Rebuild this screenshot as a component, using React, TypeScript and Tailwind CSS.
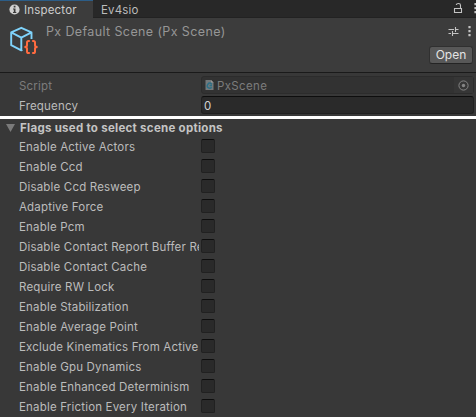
import React from "react";

const flags = [
  "Enable Active Actors",
  "Enable Ccd",
  "Disable Ccd Resweep",
  "Adaptive Force",
  "Enable Pcm",
  "Disable Contact Report Buffer Resizing",
  "Disable Contact Cache",
  "Require RW Lock",
  "Enable Stabilization",
  "Enable Average Point",
  "Exclude Kinematics From Active Actors",
  "Enable Gpu Dynamics",
  "Enable Enhanced Determinism",
  "Enable Friction Every Iteration",
];

function InfoIcon() {
  return (
    <svg className="h-[11px] w-[11px]" viewBox="0 0 11 11">
      <circle cx="5.5" cy="5.5" r="5.1" fill="#d0d0d0" />
      <path d="M4.7 1.8h1.8v1.7H4.7zM4 4.5h2.5v3.5h.8v1H4V8h.8V5.5H4z" fill="#3c3c3c" />
    </svg>
  );
}

function LockIcon() {
  return (
    <svg className="h-[12px] w-[10px]" viewBox="0 0 10 12" fill="none" stroke="#c4c4c4" strokeWidth="1.1">
      <path d="M1.5 6.5h7v4h-7z" />
      <path d="M7.5 6.5V3.2Q7.5 1.5 5.5 1.5T3.2 3" />
    </svg>
  );
}

function DotsIcon() {
  return (
    <svg className="h-[12px] w-[3px] shrink-0" viewBox="0 0 3 12" fill="#c4c4c4">
      <rect x=".4" y="1" width="2.2" height="2.2" rx=".5" />
      <rect x=".4" y="5" width="2.2" height="2.2" rx=".5" />
      <rect x=".4" y="9" width="2.2" height="2.2" rx=".5" />
    </svg>
  );
}

function PresetIcon() {
  return (
    <svg className="h-[10px] w-[11px]" viewBox="0 0 11 10" fill="none" stroke="#c4c4c4" strokeWidth="1.1">
      <path d="M.5 3.5h5.5M7.5 3.5h3M7.5 1v5M.5 7.5h2.5M4.5 7.5h6M4.5 5v5" />
    </svg>
  );
}

function ScriptableObjectIcon() {
  return (
    <svg className="h-[30px] w-[30px]" viewBox="0 0 30 30" fill="none">
      <path
        d="M13.4 23.8 12.3 24.3 2.2 19.2V6.4L12.3 1.8 22.5 6.4V13M2.2 6.4l10.1 5.2 10.2-5.2M12.3 11.6v12.6"
        stroke="#7fd3fb"
        strokeWidth="1.9"
        strokeLinejoin="round"
      />
      <path
        d="M20.8 15h-1.2Q18 15 18 16.6v2.9q0 1.3-2.5 1.5 2.5.2 2.5 1.5v2.9Q18 27 19.6 27h1.2M23.2 15h1.2q1.6 0 1.6 1.6v2.9q0 1.3 2.5 1.5-2.5.2-2.5 1.5v2.9q0 1.6-1.6 1.6h-1.2"
        stroke="#ff6b40"
        strokeWidth="2"
      />
    </svg>
  );
}

function ScriptFileIcon() {
  return (
    <svg className="h-[10px] w-[9px]" viewBox="0 0 9 10">
      <path d="M.5 0H6l2.5 2.5V10h-8z" fill="#74797b" />
      <path d="M6 0v2.5h2.5z" fill="#999" />
      <path d="M6.8 4.2Q4.5 2 2.9 4.2t.3 3.5 3.5-.4M4.6 5.4h2.4" fill="none" stroke="#2d7087" strokeWidth="1.5" />
    </svg>
  );
}

function TargetIcon() {
  return (
    <svg className="h-[11px] w-[11px]" viewBox="0 0 11 11">
      <circle cx="5.5" cy="5.5" r="4.6" fill="none" stroke="#858585" />
      <circle cx="5.5" cy="5.5" r="1.7" fill="#858585" />
    </svg>
  );
}

export default function App() {
  return (
    <div className="flex h-[417px] w-[476px] flex-col overflow-hidden bg-[#383838] font-['Inter',sans-serif] text-[11.5px] leading-[18px] tracking-[0.18px] text-[#bcbcbc]">
      <div className="flex h-[18px] shrink-0 bg-[#282828]">
        <div className="flex h-[18px] w-[93px] items-center gap-[4px] border-t border-[#2c5d87] bg-[#3c3c3c] pl-[9px] text-[#cccccc]">
          <InfoIcon />
          <span className="pt-px">Inspector</span>
        </div>
        <div className="flex grow items-center border-b border-[#222222] pl-[8px]">
          <span className="pt-[2px]">Ev4sio</span>
          <div className="ml-auto flex h-full items-start gap-[11px] overflow-hidden pt-[2px]">
            <LockIcon />
            <div className="w-[2px] overflow-hidden">
              <DotsIcon />
            </div>
          </div>
        </div>
      </div>

      <header className="flex h-[55px] shrink-0 border-b border-[#1a1a1a] bg-[#3c3c3c]">
        <div className="pt-[8px] pl-[9px]">
          <ScriptableObjectIcon />
        </div>
        <h1 className="pt-[5px] pl-[7px] text-[12.5px] tracking-[0.38px] text-[#969696]">
          Px Default Scene (Px Scene)
        </h1>
        <div className="ml-auto flex flex-col items-end pr-[3px]">
          <div className="mt-[7px] flex h-[12px] items-center gap-[9px] pr-[2px]">
            <PresetIcon />
            <DotsIcon />
          </div>
          <button className="mt-[9px] flex h-[18px] w-[44px] items-center justify-center rounded-[3px] border border-[#303030] border-b-[#242424] bg-[#585858] text-[12px] tracking-normal text-[#e4e4e4]">
            Open
          </button>
        </div>
      </header>

      <section className="flex h-[43px] shrink-0 flex-col gap-[2px] pt-[3px] pr-[2px] pl-[19px]">
        <div className="flex h-[18px] items-center">
          <span className="w-[182px] pt-[2px] text-[#7c7c7c]">Script</span>
          <div className="flex h-[18px] grow items-center rounded-[3px] border border-[#2c2c2c] bg-[#323232] pl-[3px] text-[#7c7c7c]">
            <ScriptFileIcon />
            <span className="pt-px pl-[3px] tracking-[0.35px]">PxScene</span>
            <div className="ml-auto flex h-[16px] w-[19px] items-center justify-center bg-[#363636]">
              <TargetIcon />
            </div>
          </div>
        </div>
        <div className="flex h-[18px] items-center">
          <span className="w-[182px] pt-[2px]">Frequency</span>
          <div className="flex h-[18px] grow items-center rounded-[3px] border border-[#212121] border-t-[#0d0d0d] bg-[#2a2a2a] pt-px pl-[2px] text-[#d2d2d2]">
            0
          </div>
        </div>
      </section>

      <div className="h-[3px] shrink-0 bg-white" />

      <section className="flex flex-col">
        <div className="flex h-[17px] items-center pl-[6px]">
          <svg className="h-[8px] w-[9px]" viewBox="0 0 9 8">
            <path d="M0 0h9L4.5 8z" fill="#7a7a7a" />
          </svg>
          <span className="pl-[5px] font-bold tracking-[0.28px] text-[#c4c4c4]">Flags used to select scene options</span>
        </div>
        {flags.map((flag) => (
          <div key={flag} className="flex h-[20px] shrink-0 items-center pl-[19px]">
            <span className="w-[180px] overflow-hidden pt-[2px] whitespace-nowrap">{flag}</span>
            <span className="ml-[2px] h-[14px] w-[14px] rounded-[2px] border border-[#212121] border-t-[#0d0d0d] bg-[#2a2a2a]" />
          </div>
        ))}
      </section>
    </div>
  );
}
